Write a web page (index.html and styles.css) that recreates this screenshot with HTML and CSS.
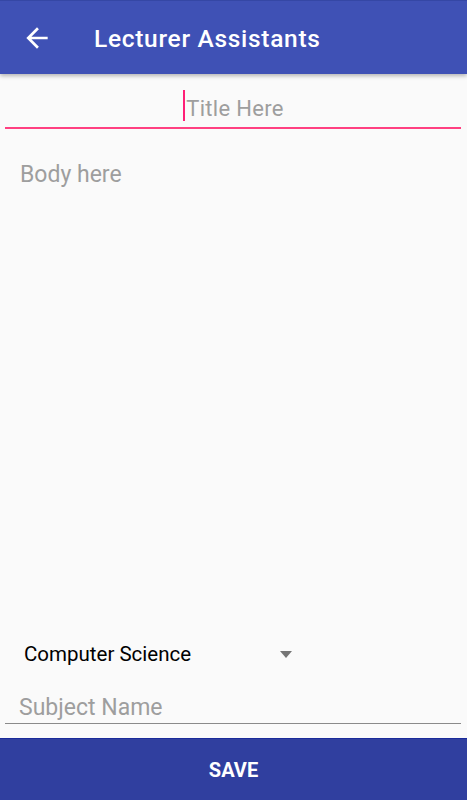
FILE: index.html
```html
<!DOCTYPE html>
<html>
<head>
<meta charset="utf-8">
<link rel="stylesheet" href="styles.css">
</head>
<body>
<div class="screen">
  <header class="appbar">
    <svg class="back" viewBox="0 0 24 24" width="32" height="32"><path fill="#fff" d="M20 11H7.83l5.59-5.59L12 4l-8 8 8 8 1.41-1.41L7.83 13H20v-2z"/></svg>
    <h1 class="title">Lecturer Assistants</h1>
  </header>
  <div class="title-field">
    <div class="title-input"><span class="cursor"></span><span class="ph">Title Here</span></div>
  </div>
  <div class="body-field"><span class="ph">Body here</span></div>
  <div class="spacer"></div>
  <div class="spinner">
    <span class="spin-text">Computer Science</span>
    <span class="tri"></span>
  </div>
  <div class="subject-field"><span class="ph">Subject Name</span></div>
  <button class="save">SAVE</button>
</div>
</body>
</html>
```
FILE: styles.css
```css
* { box-sizing: border-box; }
html, body { margin: 0; padding: 0; }
body {
  background: #fafafa;
  font-family: Roboto, "Liberation Sans", sans-serif;
}
.screen {
  width: 467px;
  height: 800px;
  display: flex;
  flex-direction: column;
  overflow: hidden;
}
.appbar {
  height: 74px;
  flex: none;
  background: #3f51b5;
  border-top: 1px solid #3547a5;
  display: flex;
  align-items: center;
  box-shadow: 0 2px 4px rgba(0,0,0,0.28);
  position: relative;
  z-index: 1;
}
.back {
  margin-left: 21px;
  margin-top: 1px;
  flex: none;
}
.title {
  margin: 2px 0 0 41px;
  color: #fff;
  font-size: 24.5px;
  font-weight: 500;
  letter-spacing: 0.7px;
}
.ph { color: #9e9e9e; }
.title-field {
  height: 55px;
  flex: none;
  padding: 0 6px 0 5px;
  display: flex;
  align-items: flex-end;
}
.title-input {
  width: 100%;
  height: 40px;
  border-bottom: 2px solid #ff4081;
  display: flex;
  justify-content: center;
  align-items: flex-end;
  font-size: 22px;
  letter-spacing: 0.3px;
  line-height: 28px;
  padding-bottom: 4.5px;
  padding-left: 1px;
}
.cursor {
  width: 2px;
  height: 31px;
  background: #ff1f77;
  margin-bottom: 1.5px;
  margin-right: 1px;
}
.body-field {
  padding: 31px 0 0 20px;
  font-size: 23px;
  line-height: 30px;
  flex: none;
}
.spacer { flex: 1; }
.spinner {
  height: 48px;
  flex: none;
  display: flex;
  align-items: center;
  padding-left: 24px;
}
.spin-text {
  font-size: 20.5px;
  color: #000;
  width: 256px;
}
.tri {
  width: 0;
  height: 0;
  border-left: 6.5px solid transparent;
  border-right: 6.5px solid transparent;
  border-top: 7px solid #757575;
}
.subject-field {
  flex: none;
  height: 46px;
  margin: 0 6px 14px 5px;
  padding-left: 14px;
  display: flex;
  align-items: flex-end;
  font-size: 23px;
  line-height: 30px;
  border-bottom: 1px solid #8a8a8a;
}
.save {
  flex: none;
  height: 62px;
  width: 100%;
  border: none;
  border-top: 1px solid #1a2a9a;
  background: #303f9f;
  color: #fff;
  font-family: Roboto, "Liberation Sans", sans-serif;
  font-weight: 700;
  font-size: 20px;
  padding: 0;
}
```
